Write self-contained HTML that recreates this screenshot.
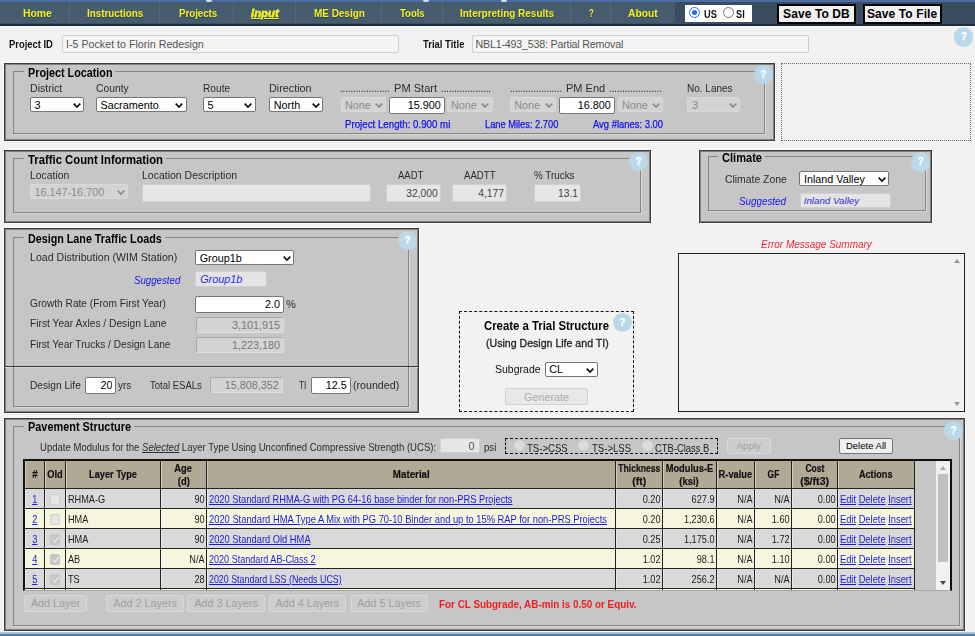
<!DOCTYPE html><html lang="en"><head><meta charset="utf-8"><title>Input</title><style>
*{box-sizing:border-box;margin:0;padding:0}
html,body{width:975px;height:636px;overflow:hidden;background:#f2f2f2;font-family:"Liberation Sans",sans-serif;color:#222}
body{position:relative}
body *{position:absolute}
.t{white-space:nowrap;display:block;transform-origin:0 0}
.b{font-weight:bold}
.i{font-style:italic}
.lbl{color:#2b2b2b}
.blue{color:#1616ee}
.blue.sm{color:#1010f4;-webkit-text-stroke:0.25px #1010f4}
.topstrip{left:0;top:0;width:975px;height:3px;background:#4a6ca6}
.nav{left:0;top:2px;width:975px;height:24px;background:#485c70;border-bottom:2px solid #1f2b38;box-shadow:inset 0 -1px 0 #3e5064,0 1px 0 #fafafa}
.nav2{left:675px;top:2px;width:300px;height:21px;background:#3a4c60}
.nav i{top:0;width:1px;height:21px;background:#54697f;font-style:normal}
.nv{color:#f2f224;font-weight:bold;text-shadow:0 1px 1px rgba(20,20,40,.45);text-align:center}
.sec{background:#c6c6c6;border:1px solid #3c3c3c;box-shadow:0 0 0 1px #fbfbfb,inset 0 0 0 1px rgba(60,60,60,.5)}
.fs{border:1px solid #858585;box-shadow:1px 1px 0 #d8d8d8}
.leg{background:#c6c6c6;font-weight:bold;color:#000}
.help{border-radius:50%;background:#b9d9ea;color:#fff;font-weight:bold;font-size:10px;text-align:center;-webkit-text-stroke:0.3px #fff}
.sel{background:#fff;border:1px solid #767676;border-radius:2px}
.sel.dis{background:#d3d3d3;border-color:#d9d9d9}
.sel select{left:0;top:0;width:100%;height:100%;-webkit-appearance:none;appearance:none;border:0;background:transparent;font-family:"Liberation Sans",sans-serif;font-size:10.8px;color:#000;padding:0 0 0 3.5px;margin:0;outline:0}
.sel.dis select{color:#8c8c8c;opacity:1}
.sel svg{stroke:#111;overflow:visible}
.sel.dis svg{stroke:#8c8c8c}
input[type=text]{font-family:"Liberation Sans",sans-serif;font-size:10.8px;color:#000;background:#fff;border:1px solid #767676;border-radius:2px;padding:0 3px;text-align:right}
input.ro{background:#f4f4f4;border:1px solid #cfcfcf;color:#555;text-align:left;font-size:10.7px;padding:0 3px}
input.dis{background:#e6e6e6;border:1px solid #d0d0d0;color:#444;font-size:10.3px;padding:0 2.5px}
input.dis2{background:#d4d4d4;border:1px solid;border-color:#aaa #dedede #dedede #aaa;color:#787878}
input.sug{background:#e4e4e4;border:1px solid #d0d0d0;color:#2a2ae0;font-style:italic;text-align:left;padding:0 4px}
button{white-space:nowrap;font-family:"Liberation Sans",sans-serif;font-size:10.8px;color:#000;background:#efefef;border:1px solid #767676;border-radius:2px;padding:0;text-align:center}
button:disabled{color:#9f9f9f;background:#cdcdcd;border-color:#d9d9d9}
button.lt:disabled{color:#ababab;background:#e8e8e8;border-color:#d2d2d2}
button.save{font-weight:bold;font-size:12px;border:2px solid #000;background:#f0f0f0;border-radius:0;letter-spacing:.1px}
.dot{border:1px dotted #666}
.dash{border:1px dashed #111}
.radio{border-radius:50%;border:1px solid #767676;background:#fff}
.radio.on{border:1.5px solid #1a6fff}
.radio.on::after{content:"";position:absolute;left:2px;top:2px;right:2px;bottom:2px;border-radius:50%;background:#1a6fff}
.radio.off{border:1px solid #d6d6d6;background:#dbdbdb}
.err{border:1px solid #222;background:#f2f2f2}
.tri{width:0;height:0;border-left:3px solid transparent;border-right:3px solid transparent}
.tri.up{border-bottom:4px solid #999}
.tri.dn{border-top:4px solid #999}
.tri.dk.dn{border-top-color:#444}
.tri.up.lt{border-bottom-color:#a8a8a8}
.grid{border:2px solid #111;border-bottom:1px solid #a8a8a8;background:#c6c6c6;overflow:hidden}
table{border-collapse:separate;border-spacing:0;left:0;top:0;table-layout:fixed;font-size:10.5px;color:#1c1c1c}
table *{position:static}
th{background:#b1a995;font-weight:bold;color:#111;-webkit-text-stroke:0.2px #111;border:0 solid #222;border-width:0 1px 1px 0;padding:0;height:28px;font-size:10.75px;line-height:12.2px;overflow:hidden;text-align:center;white-space:nowrap}
.hx{display:inline-block;transform-origin:50% 50%;margin:0 -6px}
td{border:0 solid #222;border-width:0 1px 1px 0;height:20px;padding:2px 0 0 0;white-space:nowrap;overflow:hidden;line-height:17px;vertical-align:top}
.sxl{display:inline-block;transform-origin:0 50%}
.ci{transform-origin:0 0;padding:0 1.6px 0 2.2px;white-space:nowrap}
.ci.r{text-align:right}
.ci.c{text-align:center}
td,th{box-shadow:inset 1px 0 0 rgba(255,255,255,.4)}
tr.g td{background:#d9d9d9}
tr.y td{background:#f6f6de}
td a{color:#1a1ae6;text-decoration:underline}
.cb{display:inline-block;width:10.5px;height:10.5px;border:1px solid #cdcdcd;background:#e6e6e6;border-radius:2px;vertical-align:-1.5px;position:relative}
.cb.on{background:#c6c6c6;border-color:#c6c6c6}
.cb.on::after{content:"";position:absolute;left:2.8px;top:0.2px;width:2.6px;height:5.6px;border:solid #f6f6f6;border-width:0 1.6px 1.6px 0;transform:rotate(40deg)}
.sbar{background:#f1f1f1}
.thumb{background:#c1c1c1}
.bot1{left:0;top:632px;width:975px;height:2px;background:#a9c3db}
.bot2{left:0;top:634px;width:975px;height:2px;background:#4f7fae}
</style></head><body>
<div class="topstrip"></div>
<div style="left:206px;top:0;width:6px;height:2px;background:rgba(255,255,255,.8);border-radius:0 0 2px 2px"></div>
<div style="left:423px;top:0;width:6px;height:2px;background:rgba(255,255,255,.8);border-radius:0 0 2px 2px"></div>
<div style="left:501px;top:0;width:6px;height:2px;background:rgba(255,255,255,.8);border-radius:0 0 2px 2px"></div>
<div class="nav">
<i style="left:69.0px"></i>
<i style="left:159.0px"></i>
<i style="left:233.0px"></i>
<i style="left:295.0px"></i>
<i style="left:381.0px"></i>
<i style="left:442.0px"></i>
<i style="left:570.0px"></i>
<i style="left:610.0px"></i>
</div>
<div class="nav2"></div>
<span id="t1" class="t nv" style="left:23.4px;top:5.4px;font-size:11px;line-height:16px;transform:scaleX(0.9423);">Home</span>
<span id="t2" class="t nv" style="left:87.4px;top:5.4px;font-size:11px;line-height:16px;transform:scaleX(0.8927);">Instructions</span>
<span id="t3" class="t nv" style="left:178.5px;top:5.4px;font-size:11px;line-height:16px;transform:scaleX(0.8797);">Projects</span>
<span id="t4" class="t nv" style="left:251.3px;top:5.4px;font-size:11px;line-height:16px;transform:scaleX(1.0301);text-decoration:underline;font-style:italic;-webkit-text-stroke:0.3px #f2f224;">Input</span>
<span id="t5" class="t nv" style="left:314.0px;top:5.4px;font-size:11px;line-height:16px;transform:scaleX(0.9034);">ME Design</span>
<span id="t6" class="t nv" style="left:400.3px;top:5.4px;font-size:11px;line-height:16px;transform:scaleX(0.8627);">Tools</span>
<span id="t7" class="t nv" style="left:459.7px;top:5.4px;font-size:11px;line-height:16px;transform:scaleX(0.9056);">Interpreting Results</span>
<span id="t8" class="t nv" style="left:588.5px;top:5.4px;font-size:11px;line-height:16px;transform:scaleX(0.6979);">?</span>
<span id="t9" class="t nv" style="left:628.4px;top:5.4px;font-size:11px;line-height:16px;transform:scaleX(0.9318);">About</span>
<div class="" style="left:685.0px;top:5.0px;width:67.0px;height:17.0px;background:#fff;"></div>
<div class="radio on" style="left:689.4px;top:7.2px;width:11.0px;height:11.0px;"></div>
<span id="t10" class="t b" style="left:703.6px;top:5.7px;font-size:11px;line-height:16px;color:#111;transform:scaleX(0.8442);">US</span>
<div class="radio" style="left:722.7px;top:7.2px;width:11.0px;height:11.0px;"></div>
<span id="t11" class="t b" style="left:736.3px;top:5.7px;font-size:11px;line-height:16px;color:#111;transform:scaleX(0.8360);">SI</span>
<button class="save" style="left:777.0px;top:4.0px;width:79.0px;height:20.0px;">Save To DB</button>
<button class="save" style="left:862.6px;top:4.0px;width:79.1px;height:20.0px;">Save To File</button>
<span id="t12" class="t b" style="left:8.6px;top:35.7px;font-size:11px;line-height:16px;color:#111;transform:scaleX(0.8548);">Project ID</span>
<input type="text" class="ro" value="I-5 Pocket to Florin Redesign" style="left:62.0px;top:34.5px;width:337.0px;height:18.0px;">
<span id="t13" class="t b" style="left:422.5px;top:35.7px;font-size:11px;line-height:16px;color:#111;transform:scaleX(0.8608);">Trial Title</span>
<input type="text" class="ro" value="NBL1-493_538: Partial Removal" style="left:471.5px;top:34.5px;width:337.1px;height:18.0px;letter-spacing:-0.197px;">
<div class="help" style="left:953.9px;top:27.2px;width:19.6px;height:19.6px;line-height:19.6px">?</div>
<div class="sec" style="left:4.0px;top:63.0px;width:771.0px;height:78.0px;"></div>
<div class="fs" style="left:13.0px;top:71.0px;width:752.0px;height:63.0px;"></div>
<div class="leg" style="left:24.0px;top:70.0px;width:91.0px;height:4.0px;"></div>
<span id="t14" class="t b leg2" style="left:27.6px;top:64.8px;font-size:12px;line-height:16px;color:#000;transform:scaleX(0.8988);">Project Location</span>
<div class="help" style="left:753.5px;top:64.9px;width:19.6px;height:19.6px;line-height:19.6px">?</div>
<span id="t15" class="t lbl" style="left:30.0px;top:80.0px;font-size:11.5px;line-height:16px;transform:scaleX(0.9192);">District</span>
<span id="t16" class="t lbl" style="left:96.0px;top:80.0px;font-size:11.5px;line-height:16px;transform:scaleX(0.9002);">County</span>
<span id="t17" class="t lbl" style="left:203.4px;top:80.0px;font-size:11.5px;line-height:16px;transform:scaleX(0.8864);">Route</span>
<span id="t18" class="t lbl" style="left:269.3px;top:80.0px;font-size:11.5px;line-height:16px;transform:scaleX(0.9385);">Direction</span>
<span id="t19" class="t lbl" style="left:687.4px;top:80.0px;font-size:11.5px;line-height:16px;transform:scaleX(0.8696);">No. Lanes</span>
<div class="sel" style="left:30.0px;top:97.4px;width:54.0px;height:15.0px;"><select><option>3</option></select><svg viewBox="0 0 8 5" style="left:41.7px;top:4.9px;width:8px;height:5px"><path d="M0.7 0.7 L4 4 L7.3 0.7" fill="none" stroke-width="1.75"/></svg></div>
<div class="sel" style="left:96.0px;top:97.4px;width:90.5px;height:15.0px;"><select><option>Sacramento</option></select><svg viewBox="0 0 8 5" style="left:78.2px;top:4.9px;width:8px;height:5px"><path d="M0.7 0.7 L4 4 L7.3 0.7" fill="none" stroke-width="1.75"/></svg></div>
<div class="sel" style="left:203.0px;top:97.4px;width:52.5px;height:15.0px;"><select><option>5</option></select><svg viewBox="0 0 8 5" style="left:40.2px;top:4.9px;width:8px;height:5px"><path d="M0.7 0.7 L4 4 L7.3 0.7" fill="none" stroke-width="1.75"/></svg></div>
<div class="sel" style="left:269.3px;top:97.4px;width:54.0px;height:15.0px;"><select><option>North</option></select><svg viewBox="0 0 8 5" style="left:41.7px;top:4.9px;width:8px;height:5px"><path d="M0.7 0.7 L4 4 L7.3 0.7" fill="none" stroke-width="1.75"/></svg></div>
<div class="sel dis" style="left:340.5px;top:97.4px;width:45.8px;height:15.0px;"><select disabled><option>None</option></select><svg viewBox="0 0 8 5" style="left:33.5px;top:4.9px;width:8px;height:5px"><path d="M0.7 0.7 L4 4 L7.3 0.7" fill="none" stroke-width="1.75"/></svg></div>
<input type="text" class="" value="15.900" style="left:389.0px;top:96.9px;width:55.8px;height:16.7px;">
<div class="sel dis" style="left:446.5px;top:97.4px;width:46.0px;height:15.0px;"><select disabled><option>None</option></select><svg viewBox="0 0 8 5" style="left:33.7px;top:4.9px;width:8px;height:5px"><path d="M0.7 0.7 L4 4 L7.3 0.7" fill="none" stroke-width="1.75"/></svg></div>
<div class="sel dis" style="left:509.8px;top:97.4px;width:46.2px;height:15.0px;"><select disabled><option>None</option></select><svg viewBox="0 0 8 5" style="left:33.9px;top:4.9px;width:8px;height:5px"><path d="M0.7 0.7 L4 4 L7.3 0.7" fill="none" stroke-width="1.75"/></svg></div>
<input type="text" class="" value="16.800" style="left:559.3px;top:96.9px;width:55.4px;height:16.7px;">
<div class="sel dis" style="left:617.5px;top:97.4px;width:45.5px;height:15.0px;"><select disabled><option>None</option></select><svg viewBox="0 0 8 5" style="left:33.2px;top:4.9px;width:8px;height:5px"><path d="M0.7 0.7 L4 4 L7.3 0.7" fill="none" stroke-width="1.75"/></svg></div>
<div class="sel dis" style="left:687.4px;top:97.4px;width:52.6px;height:15.0px;"><select disabled><option>3</option></select><svg viewBox="0 0 8 5" style="left:40.3px;top:4.9px;width:8px;height:5px"><path d="M0.7 0.7 L4 4 L7.3 0.7" fill="none" stroke-width="1.75"/></svg></div>
<span id="t20" class="t lbl" style="left:340.2px;top:80.0px;font-size:11.5px;line-height:16px;transform:scaleX(0.8185);">...................</span>
<span id="t21" class="t lbl" style="left:393.9px;top:80.0px;font-size:11.5px;line-height:16px;transform:scaleX(0.9635);">PM Start</span>
<span id="t22" class="t lbl" style="left:441.0px;top:80.0px;font-size:11.5px;line-height:16px;transform:scaleX(0.8235);">...................</span>
<span id="t23" class="t lbl" style="left:509.6px;top:80.0px;font-size:11.5px;line-height:16px;transform:scaleX(0.8137);">....................</span>
<span id="t24" class="t lbl" style="left:565.9px;top:80.0px;font-size:11.5px;line-height:16px;transform:scaleX(0.9579);">PM End</span>
<span id="t25" class="t lbl" style="left:608.5px;top:80.0px;font-size:11.5px;line-height:16px;transform:scaleX(0.8262);">....................</span>
<span id="t26" class="t blue sm" style="left:344.7px;top:116.0px;font-size:10.5px;line-height:16px;transform:scaleX(0.9251);">Project Length: 0.900 mi</span>
<span id="t27" class="t blue sm" style="left:485.2px;top:116.0px;font-size:10.5px;line-height:16px;transform:scaleX(0.8843);">Lane Miles: 2.700</span>
<span id="t28" class="t blue sm" style="left:592.5px;top:116.0px;font-size:10.5px;line-height:16px;transform:scaleX(0.8969);">Avg #lanes: 3.00</span>
<div class="dot" style="left:781.3px;top:63.0px;width:189.7px;height:77.5px;"></div>
<div class="sec" style="left:4.0px;top:150.0px;width:647.0px;height:73.0px;"></div>
<div class="fs" style="left:13.0px;top:158.0px;width:628.0px;height:55.0px;"></div>
<div class="leg" style="left:24.0px;top:157.0px;width:142.0px;height:5.0px;"></div>
<span id="t29" class="t b" style="left:27.6px;top:151.8px;font-size:12px;line-height:16px;color:#000;transform:scaleX(0.9419);">Traffic Count Information</span>
<div class="help" style="left:628.8px;top:151.8px;width:19.6px;height:19.6px;line-height:19.6px">?</div>
<span id="t30" class="t lbl" style="left:30.0px;top:167.0px;font-size:11.5px;line-height:16px;transform:scaleX(0.9038);">Location</span>
<span id="t31" class="t lbl" style="left:141.6px;top:167.0px;font-size:11.5px;line-height:16px;transform:scaleX(0.9126);">Location Description</span>
<span id="t32" class="t lbl" style="left:398.0px;top:167.0px;font-size:11.5px;line-height:16px;transform:scaleX(0.8281);">AADT</span>
<span id="t33" class="t lbl" style="left:464.0px;top:167.0px;font-size:11.5px;line-height:16px;transform:scaleX(0.8381);">AADTT</span>
<span id="t34" class="t lbl" style="left:534.3px;top:167.0px;font-size:11.5px;line-height:16px;transform:scaleX(0.8563);">% Trucks</span>
<div class="sel dis" style="left:30.0px;top:184.3px;width:98.0px;height:14.5px;"><select disabled><option>16.147-16.700</option></select><svg viewBox="0 0 8 5" style="left:85.7px;top:4.7px;width:8px;height:5px"><path d="M0.7 0.7 L4 4 L7.3 0.7" fill="none" stroke-width="1.75"/></svg></div>
<input type="text" class="dis" value="" style="left:141.6px;top:184.3px;width:229.4px;height:18.0px;">
<input type="text" class="dis" value="32,000" style="left:385.8px;top:184.3px;width:55.5px;height:18.0px;">
<input type="text" class="dis" value="4,177" style="left:451.7px;top:184.3px;width:55.8px;height:18.0px;">
<input type="text" class="dis" value="13.1" style="left:534.3px;top:184.3px;width:47.2px;height:18.0px;">
<div class="sec" style="left:699.0px;top:150.0px;width:233.0px;height:73.0px;"></div>
<div class="fs" style="left:708.0px;top:156.0px;width:218.0px;height:55.0px;"></div>
<div class="leg" style="left:718.0px;top:155.0px;width:47.0px;height:4.0px;"></div>
<span id="t35" class="t b" style="left:721.8px;top:150.3px;font-size:12px;line-height:16px;color:#000;transform:scaleX(0.9225);">Climate</span>
<div class="help" style="left:910.7px;top:152.0px;width:19.6px;height:19.6px;line-height:19.6px">?</div>
<span id="t36" class="t lbl" style="left:724.8px;top:171.0px;font-size:11.5px;line-height:16px;transform:scaleX(0.9022);">Climate Zone</span>
<div class="sel" style="left:799.4px;top:171.2px;width:89.8px;height:15.3px;"><select><option>Inland Valley</option></select><svg viewBox="0 0 8 5" style="left:77.5px;top:5.1px;width:8px;height:5px"><path d="M0.7 0.7 L4 4 L7.3 0.7" fill="none" stroke-width="1.75"/></svg></div>
<span id="t37" class="t i blue" style="left:739.3px;top:193.0px;font-size:11.5px;line-height:16px;transform:scaleX(0.8545);">Suggested</span>
<input type="text" class="sug" value="Inland Valley" style="left:799.7px;top:192.7px;width:91.8px;height:15.3px;font-size:9.75px;padding:0 3px;">
<span id="t38" class="t i" style="left:760.8px;top:235.8px;font-size:11.5px;line-height:16px;color:#f0283c;transform:scaleX(0.8669);">Error Message Summary</span>
<div class="err" style="left:678.4px;top:253.0px;width:286.6px;height:159.0px;"></div>
<div class="tri up" style="left:954.0px;top:259.0px;width:6.0px;height:4.0px;"></div>
<div class="tri dn" style="left:954.0px;top:402.0px;width:6.0px;height:4.0px;"></div>
<div class="sec" style="left:4.0px;top:228.0px;width:415.0px;height:185.0px;"></div>
<div class="fs" style="left:13.0px;top:237.0px;width:396.0px;height:170.0px;"></div>
<div class="" style="left:5.0px;top:366.0px;width:413.0px;height:1.0px;background:#333;"></div>
<div class="" style="left:5.0px;top:367.0px;width:413.0px;height:1.0px;background:#d6d6d6;"></div>
<div class="" style="left:13.0px;top:367.0px;width:1.0px;height:1.0px;background:#858585;"></div>
<div class="" style="left:408.0px;top:367.0px;width:1.0px;height:1.0px;background:#858585;"></div>
<div class="leg" style="left:24.0px;top:235.5px;width:141.0px;height:5.0px;"></div>
<span id="t39" class="t b" style="left:27.6px;top:230.5px;font-size:12px;line-height:16px;color:#000;transform:scaleX(0.8951);">Design Lane Traffic Loads</span>
<div class="help" style="left:397.7px;top:230.7px;width:19.6px;height:19.6px;line-height:19.6px">?</div>
<span id="t40" class="t lbl" style="left:30.0px;top:249.4px;font-size:11.5px;line-height:16px;transform:scaleX(0.9218);">Load Distribution (WIM Station)</span>
<div class="sel" style="left:195.2px;top:250.0px;width:99.0px;height:15.3px;"><select><option>Group1b</option></select><svg viewBox="0 0 8 5" style="left:86.7px;top:5.1px;width:8px;height:5px"><path d="M0.7 0.7 L4 4 L7.3 0.7" fill="none" stroke-width="1.75"/></svg></div>
<span id="t41" class="t i blue" style="left:133.5px;top:271.5px;font-size:11.5px;line-height:16px;transform:scaleX(0.8418);">Suggested</span>
<input type="text" class="sug" value="Group1b" style="left:195.2px;top:270.7px;width:72.3px;height:16.5px;">
<span id="t42" class="t lbl" style="left:30.0px;top:295.0px;font-size:11.5px;line-height:16px;transform:scaleX(0.8830);">Growth Rate (From First Year)</span>
<input type="text" class="" value="2.0" style="left:195.2px;top:295.5px;width:88.8px;height:17.0px;">
<span id="t43" class="t lbl" style="left:285.9px;top:296.2px;font-size:11px;line-height:16px;">%</span>
<span id="t44" class="t lbl" style="left:30.0px;top:315.0px;font-size:11.5px;line-height:16px;transform:scaleX(0.8897);">First Year Axles / Design Lane</span>
<input type="text" disabled class="dis2" value="3,101,915" style="left:195.5px;top:316.5px;width:88.5px;height:16.0px;">
<span id="t45" class="t lbl" style="left:30.0px;top:335.5px;font-size:11.5px;line-height:16px;transform:scaleX(0.8792);">First Year Trucks / Design Lane</span>
<input type="text" disabled class="dis2" value="1,223,180" style="left:195.5px;top:337.3px;width:88.5px;height:16.0px;">
<span id="t46" class="t lbl" style="left:30.0px;top:377.0px;font-size:11.5px;line-height:16px;transform:scaleX(0.8828);">Design Life</span>
<input type="text" class="" value="20" style="left:85.4px;top:377.0px;width:31.0px;height:16.8px;">
<span id="t47" class="t lbl" style="left:117.7px;top:377.0px;font-size:11.5px;line-height:16px;transform:scaleX(0.8668);">yrs</span>
<span id="t48" class="t lbl" style="left:150.2px;top:377.0px;font-size:11.5px;line-height:16px;transform:scaleX(0.8267);">Total ESALs</span>
<input type="text" disabled class="dis2" value="15,808,352" style="left:210.0px;top:376.8px;width:72.7px;height:16.5px;">
<span id="t49" class="t lbl" style="left:298.7px;top:377.0px;font-size:11.5px;line-height:16px;transform:scaleX(0.7133);">TI</span>
<input type="text" class="" value="12.5" style="left:311.2px;top:376.8px;width:39.5px;height:17.2px;">
<span id="t50" class="t lbl" style="left:352.5px;top:377.0px;font-size:11.5px;line-height:16px;transform:scaleX(0.9263);">(rounded)</span>
<div class="dash" style="left:459.2px;top:311.0px;width:175.2px;height:101.3px;"></div>
<span id="t51" class="t b" style="left:484.3px;top:317.8px;font-size:12px;line-height:16px;color:#000;transform:scaleX(0.9465);">Create a Trial Structure</span>
<span id="t52" class="t " style="left:485.5px;top:335.3px;font-size:11.5px;line-height:16px;color:#1c1c1c;transform:scaleX(0.9199);-webkit-text-stroke:0.3px #1c1c1c;">(Using Design Life and TI)</span>
<div class="help" style="left:612.6px;top:312.8px;width:19.6px;height:19.6px;line-height:19.6px">?</div>
<span id="t53" class="t " style="left:495.4px;top:361.0px;font-size:11.5px;line-height:16px;color:#111;transform:scaleX(0.9143);">Subgrade</span>
<div class="sel" style="left:544.7px;top:361.6px;width:53.1px;height:15.6px;"><select><option>CL</option></select><svg viewBox="0 0 8 5" style="left:40.8px;top:5.2px;width:8px;height:5px"><path d="M0.7 0.7 L4 4 L7.3 0.7" fill="none" stroke-width="1.75"/></svg></div>
<button disabled class="lt" style="left:505.3px;top:388.0px;width:82.5px;height:17.0px;">Generate</button>
<div class="sec" style="left:4.0px;top:418.0px;width:961.0px;height:213.0px;"></div>
<div class="fs" style="left:13.0px;top:426.0px;width:947.0px;height:200.0px;"></div>
<div class="leg" style="left:24.0px;top:425.0px;width:110.0px;height:4.0px;"></div>
<span id="t54" class="t b" style="left:27.6px;top:418.8px;font-size:12px;line-height:16px;color:#000;transform:scaleX(0.9085);">Pavement Structure</span>
<div class="help" style="left:943.7px;top:420.7px;width:19.6px;height:19.6px;line-height:19.6px">?</div>
<span class="t lbl" id="upd" style="left:39.9px;top:438.8px;font-size:11px;line-height:16px;transform:scaleX(0.8688)">Update Modulus for the <u class="i" style="position:static">Selected</u> Layer Type Using Unconfined Compressive Strength (UCS):</span>
<input type="text" class="dis" value="0" style="left:440.0px;top:438.3px;width:39.5px;height:15.0px;padding-right:4px;font-size:10.8px;color:#555;">
<span id="t55" class="t lbl" style="left:484.0px;top:438.8px;font-size:11px;line-height:16px;transform:scaleX(0.8747);">psi</span>
<div class="dash" style="left:505.2px;top:437.7px;width:212.8px;height:16.6px;"></div>
<div class="radio off" style="left:513.7px;top:440.3px;width:11.0px;height:11.0px;"></div>
<span id="t56" class="t lbl" style="left:527.0px;top:440.0px;font-size:11px;line-height:16px;color:#222;transform:scaleX(0.8703);">TS-&gt;CSS</span>
<div class="radio off" style="left:578.2px;top:440.3px;width:11.0px;height:11.0px;"></div>
<span id="t57" class="t lbl" style="left:591.7px;top:440.0px;font-size:11px;line-height:16px;color:#222;transform:scaleX(0.8701);">TS-&gt;LSS</span>
<div class="radio off" style="left:642.0px;top:440.3px;width:11.0px;height:11.0px;"></div>
<span id="t58" class="t lbl" style="left:654.8px;top:440.0px;font-size:11px;line-height:16px;color:#222;transform:scaleX(0.8559);">CTB-Class B</span>
<button disabled class="" style="left:726.5px;top:437.8px;width:44.5px;height:16.2px;font-size:9.8px;">Apply</button>
<button class="" style="left:839.4px;top:437.8px;width:53.3px;height:16.2px;font-size:9.5px;">Delete All</button>
<div class="grid" style="left:23px;top:459px;width:929px;height:132px">
<table style="width:890px"><colgroup><col style="width:20px"><col style="width:21px"><col style="width:95px"><col style="width:46px"><col style="width:409px"><col style="width:47px"><col style="width:54px"><col style="width:38px"><col style="width:37px"><col style="width:46px"><col style="width:77px"></colgroup>
<tr><th><span class="hx" id="h0_0" style="transform:scaleX(0.9191)">#</span></th><th><span class="hx" id="h1_0" style="transform:scaleX(0.8649)">Old</span></th><th><span class="hx" id="h2_0" style="transform:scaleX(0.8540)">Layer Type</span></th><th><span class="hx" id="h3_0" style="transform:scaleX(0.8714)">Age</span><br><span class="hx" id="h3_1" style="transform:scaleX(0.8737)">(d)</span></th><th><span class="hx" id="h4_0" style="transform:scaleX(0.9080)">Material</span></th><th><span class="hx" id="h5_0" style="transform:scaleX(0.8005)">Thickness</span><br><span class="hx" id="h5_1" style="transform:scaleX(0.9701)">(ft)</span></th><th><span class="hx" id="h6_0" style="transform:scaleX(0.8664)">Modulus-E</span><br><span class="hx" id="h6_1" style="transform:scaleX(0.8775)">(ksi)</span></th><th><span class="hx" id="h7_0" style="transform:scaleX(0.8650)">R-value</span></th><th><span class="hx" id="h8_0" style="transform:scaleX(0.7833)">GF</span></th><th><span class="hx" id="h9_0" style="transform:scaleX(0.7953)">Cost</span><br><span class="hx" id="h9_1" style="transform:scaleX(0.9875)">($/ft3)</span></th><th><span class="hx" id="h10_0" style="transform:scaleX(0.8523)">Actions</span></th></tr>
<tr class="g"><td><div class="ci c" style="width:21.7px;transform:scaleX(0.8740)"><a id="n0">1</a></div></td><td><div class="ci c" style="width:20.0px;padding:0"><span class="cb"></span></div></td><td><div class="ci " style="width:107.6px;transform:scaleX(0.8740)"><span id="lt0">RHMA-G</span></div></td><td><div class="ci r" style="width:51.5px;transform:scaleX(0.8740)">90</div></td><td><div class="ci " style="width:408.0px;transform:scaleX(1.0000)"><a class="sxl" id="m0" style="transform:scaleX(0.8844)">2020 Standard RHMA-G with PG 64-16 base binder for non-PRS Projects</a></div></td><td><div class="ci r" style="width:52.6px;transform:scaleX(0.8740)">0.20</div></td><td><div class="ci r" style="width:60.6px;transform:scaleX(0.8740)">627.9</div></td><td><div class="ci r" style="width:42.3px;transform:scaleX(0.8740)">N/A</div></td><td><div class="ci r" style="width:41.2px;transform:scaleX(0.8740)">N/A</div></td><td><div class="ci r" style="width:51.5px;transform:scaleX(0.8740)">0.00</div></td><td><div class="ci " style="width:85.5px;transform:scaleX(0.8890)"><span id="ac0"><a>Edit</a> <a>Delete</a> <a>Insert</a></span></div></td></tr>
<tr class="y"><td><div class="ci c" style="width:21.7px;transform:scaleX(0.8740)"><a id="n1">2</a></div></td><td><div class="ci c" style="width:20.0px;padding:0"><span class="cb"></span></div></td><td><div class="ci " style="width:107.6px;transform:scaleX(0.8740)"><span id="lt1">HMA</span></div></td><td><div class="ci r" style="width:51.5px;transform:scaleX(0.8740)">90</div></td><td><div class="ci " style="width:408.0px;transform:scaleX(1.0000)"><a class="sxl" id="m1" style="transform:scaleX(0.8898)">2020 Standard HMA Type A Mix with PG 70-10 Binder and up to 15% RAP for non-PRS Projects</a></div></td><td><div class="ci r" style="width:52.6px;transform:scaleX(0.8740)">0.20</div></td><td><div class="ci r" style="width:60.6px;transform:scaleX(0.8740)">1,230.6</div></td><td><div class="ci r" style="width:42.3px;transform:scaleX(0.8740)">N/A</div></td><td><div class="ci r" style="width:41.2px;transform:scaleX(0.8740)">1.60</div></td><td><div class="ci r" style="width:51.5px;transform:scaleX(0.8740)">0.00</div></td><td><div class="ci " style="width:85.5px;transform:scaleX(0.8890)"><span id="ac1"><a>Edit</a> <a>Delete</a> <a>Insert</a></span></div></td></tr>
<tr class="g"><td><div class="ci c" style="width:21.7px;transform:scaleX(0.8740)"><a id="n2">3</a></div></td><td><div class="ci c" style="width:20.0px;padding:0"><span class="cb on"></span></div></td><td><div class="ci " style="width:107.6px;transform:scaleX(0.8740)"><span id="lt2">HMA</span></div></td><td><div class="ci r" style="width:51.5px;transform:scaleX(0.8740)">90</div></td><td><div class="ci " style="width:408.0px;transform:scaleX(1.0000)"><a class="sxl" id="m2" style="transform:scaleX(0.8881)">2020 Standard Old HMA</a></div></td><td><div class="ci r" style="width:52.6px;transform:scaleX(0.8740)">0.25</div></td><td><div class="ci r" style="width:60.6px;transform:scaleX(0.8740)">1,175.0</div></td><td><div class="ci r" style="width:42.3px;transform:scaleX(0.8740)">N/A</div></td><td><div class="ci r" style="width:41.2px;transform:scaleX(0.8740)">1.72</div></td><td><div class="ci r" style="width:51.5px;transform:scaleX(0.8740)">0.00</div></td><td><div class="ci " style="width:85.5px;transform:scaleX(0.8890)"><span id="ac2"><a>Edit</a> <a>Delete</a> <a>Insert</a></span></div></td></tr>
<tr class="y"><td><div class="ci c" style="width:21.7px;transform:scaleX(0.8740)"><a id="n3">4</a></div></td><td><div class="ci c" style="width:20.0px;padding:0"><span class="cb on"></span></div></td><td><div class="ci " style="width:107.6px;transform:scaleX(0.8740)"><span id="lt3">AB</span></div></td><td><div class="ci r" style="width:51.5px;transform:scaleX(0.8740)">N/A</div></td><td><div class="ci " style="width:408.0px;transform:scaleX(1.0000)"><a class="sxl" id="m3" style="transform:scaleX(0.8614)">2020 Standard AB-Class 2</a></div></td><td><div class="ci r" style="width:52.6px;transform:scaleX(0.8740)">1.02</div></td><td><div class="ci r" style="width:60.6px;transform:scaleX(0.8740)">98.1</div></td><td><div class="ci r" style="width:42.3px;transform:scaleX(0.8740)">N/A</div></td><td><div class="ci r" style="width:41.2px;transform:scaleX(0.8740)">1.10</div></td><td><div class="ci r" style="width:51.5px;transform:scaleX(0.8740)">0.00</div></td><td><div class="ci " style="width:85.5px;transform:scaleX(0.8890)"><span id="ac3"><a>Edit</a> <a>Delete</a> <a>Insert</a></span></div></td></tr>
<tr class="g"><td><div class="ci c" style="width:21.7px;transform:scaleX(0.8740)"><a id="n4">5</a></div></td><td><div class="ci c" style="width:20.0px;padding:0"><span class="cb on"></span></div></td><td><div class="ci " style="width:107.6px;transform:scaleX(0.8740)"><span id="lt4">TS</span></div></td><td><div class="ci r" style="width:51.5px;transform:scaleX(0.8740)">28</div></td><td><div class="ci " style="width:408.0px;transform:scaleX(1.0000)"><a class="sxl" id="m4" style="transform:scaleX(0.8451)">2020 Standard LSS (Needs UCS)</a></div></td><td><div class="ci r" style="width:52.6px;transform:scaleX(0.8740)">1.02</div></td><td><div class="ci r" style="width:60.6px;transform:scaleX(0.8740)">256.2</div></td><td><div class="ci r" style="width:42.3px;transform:scaleX(0.8740)">N/A</div></td><td><div class="ci r" style="width:41.2px;transform:scaleX(0.8740)">N/A</div></td><td><div class="ci r" style="width:51.5px;transform:scaleX(0.8740)">0.00</div></td><td><div class="ci " style="width:85.5px;transform:scaleX(0.8890)"><span id="ac4"><a>Edit</a> <a>Delete</a> <a>Insert</a></span></div></td></tr>
<tr class="y"><td></td><td></td><td></td><td></td><td></td><td></td><td></td><td></td><td></td><td></td><td></td></tr>
</table>
<div class="sbar" style="left:911px;top:0;width:14px;height:130px"></div>
<div class="thumb" style="left:913px;top:13.4px;width:10px;height:87.7px"></div>
<div class="tri up lt" style="left:915px;top:4.5px"></div>
<div class="tri dn dk" style="left:915px;top:119.8px"></div>
</div>
<button disabled class="" style="left:24.0px;top:595.4px;width:63.0px;height:16.2px;">Add Layer</button>
<button disabled class="" style="left:106.2px;top:595.4px;width:77.8px;height:16.2px;">Add 2 Layers</button>
<button disabled class="" style="left:186.8px;top:595.4px;width:78.4px;height:16.2px;">Add 3 Layers</button>
<button disabled class="" style="left:268.5px;top:595.4px;width:77.5px;height:16.2px;">Add 4 Layers</button>
<button disabled class="" style="left:350.6px;top:595.4px;width:77.1px;height:16.2px;">Add 5 Layers</button>
<span id="t59" class="t b" style="left:439.2px;top:595.7px;font-size:11px;line-height:16px;color:#f02020;transform:scaleX(0.8984);">For CL Subgrade, AB-min is 0.50 or Equiv.</span>
<div class="bot1"></div><div class="bot2"></div>
</body></html>
